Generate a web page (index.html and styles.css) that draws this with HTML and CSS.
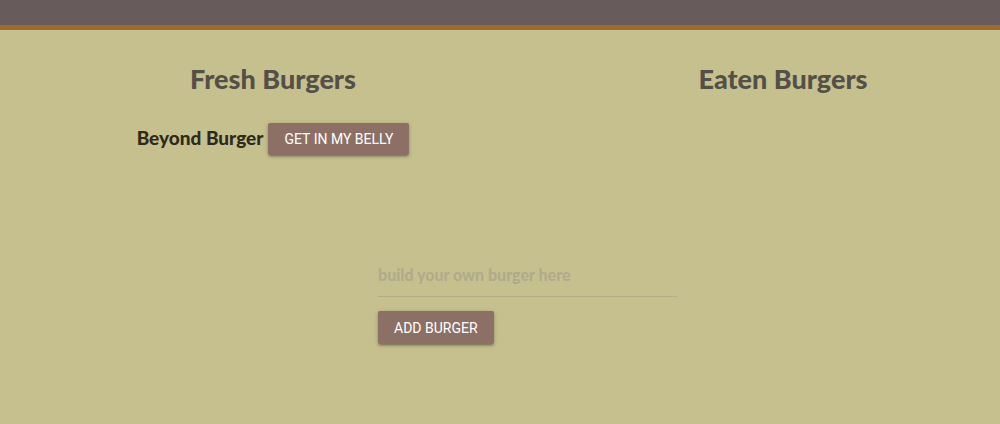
FILE: index.html
```html
<!DOCTYPE html>
<html>
<head>
<meta charset="utf-8">
<link rel="stylesheet" href="styles.css">
</head>
<body>
<header class="topbar"></header>
<main class="page">
  <div class="columns">
    <section class="col">
      <h2 class="col-title">Fresh Burgers</h2>
      <ul class="burger-list">
        <li class="burger-item">
          <span class="burger-name">Beyond Burger</span>
          <button class="btn">GET IN MY BELLY</button>
        </li>
      </ul>
    </section>
    <section class="col">
      <h2 class="col-title">Eaten Burgers</h2>
    </section>
  </div>
  <form class="add-form">
    <input class="add-input" type="text" placeholder="build your own burger here">
    <button class="btn" type="button">ADD BURGER</button>
  </form>
</main>
</body>
</html>
```
FILE: styles.css
```css
html, body {
  margin: 0;
  padding: 0;
}
body {
  background: #c6c08f;
  height: 424px;
  overflow: hidden;
  font-family: "Lato", "Noto Sans", sans-serif;
}
.topbar {
  height: 25px;
  background: #675b5c;
  border-bottom: 5px solid #9d6a2f;
}
.columns {
  display: grid;
  grid-template-columns: 546px 1fr;
  column-gap: 20px;
}
.col {
  display: flex;
  flex-direction: column;
  align-items: center;
}
.col-title {
  margin: 34px 0 0;
  font-size: 27px;
  line-height: 30px;
  font-weight: 900;
  color: #545048;
}
.burger-list {
  list-style: none;
  margin: 29px 0 0;
  padding: 0;
}
.burger-item {
  display: flex;
  align-items: center;
  gap: 5px;
}
.burger-name {
  font-size: 19px;
  font-weight: 900;
  color: #2f2b1b;
  margin-top: -3px;
}
.btn {
  height: 32px;
  padding: 0 16px;
  border: none;
  border-radius: 2px;
  background: #8d7065;
  color: #fff;
  font-family: "Roboto", "Liberation Sans", sans-serif;
  font-size: 14px;
  box-shadow: 0 2px 2px 0 rgba(0,0,0,0.14), 0 3px 1px -2px rgba(0,0,0,0.12), 0 1px 5px 0 rgba(0,0,0,0.2);
  cursor: pointer;
}
.add-form {
  margin: 97px 0 0 378px;
  width: 299px;
  display: flex;
  flex-direction: column;
  align-items: flex-start;
}
.add-input {
  width: 100%;
  box-sizing: border-box;
  height: 45px;
  padding: 0;
  background: transparent;
  border: none;
  border-bottom: 1px solid #b4ae86;
  outline: none;
  font-family: "Lato", "Noto Sans", sans-serif;
  font-size: 16px;
  font-weight: 900;
  color: #333;
}
.add-input::placeholder {
  color: #b1ab8c;
}
.add-form .btn {
  margin-top: 14px;
  height: 33px;
}
```
